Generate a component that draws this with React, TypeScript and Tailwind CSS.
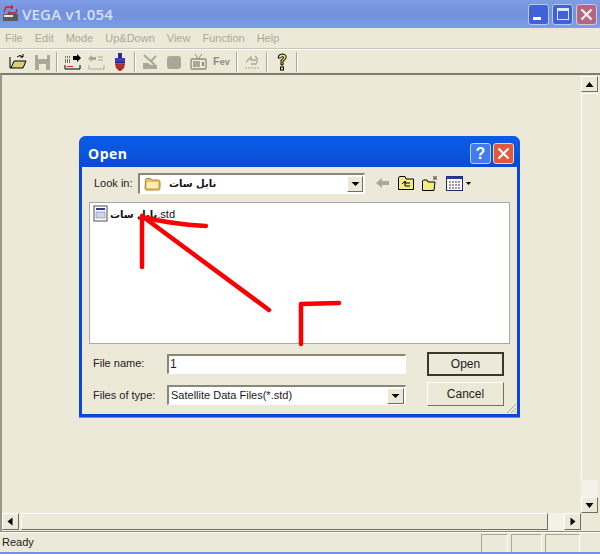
const Sep = () => <div className="w-[2px] h-[20px] mx-[2px] border-l border-[#aca899] bg-white" />

const TbIcon = ({ children }: { children: React.ReactNode }) => (
  <svg width="20" height="20" viewBox="0 0 20 20" className="shrink-0 mx-[2px]">{children}</svg>
)

const raised = "bg-[#ece9d8] border border-t-white border-l-white border-r-[#716f64] border-b-[#716f64] flex items-center justify-center"
const sunken = "border-t-2 border-l-2 border-t-[#8a8778] border-l-[#8a8778] border-r border-b border-r-white border-b-white"

const Arrow = ({ d }: { d: string }) => (
  <svg width="9" height="9" viewBox="0 0 9 9"><path d={d} fill="#000" /></svg>
)

const App = () => {
  const menus = ["File", "Edit", "Mode", "Up&Down", "View", "Function", "Help"]
  return (
    <div className="relative w-[600px] h-[554px] overflow-hidden bg-[#ece9d8] font-['Liberation_Sans',sans-serif] text-[11px] flex flex-col">
      {/* title bar */}
      <div className="h-[28px] shrink-0 flex items-center pl-[2px] pr-[3px] bg-gradient-to-b from-[#7f9de6] via-[#7290dc] to-[#7c9fe8]">
        <svg width="17" height="18" viewBox="0 0 17 18">
          <rect x="1" y="9" width="15" height="7" fill="#5a5a60" />
          <rect x="2" y="10" width="9" height="2" fill="#e8e4e0" />
          <path d="M2 7 L4 2 L11 2 M11 2 L9 0.5 M11 2 L9 4" stroke="#d02020" strokeWidth="1.3" fill="none" />
          <path d="M15 4 L14 8 L6 8 M6 8 L8 6.5 M6 8 L8 9.5" stroke="#d02020" strokeWidth="1.3" fill="none" />
        </svg>
        <span className="ml-[3px] text-[15px] font-semibold tracking-[0.2px] text-[#d7e0f6] font-['Open_Sans',sans-serif]">VEGA v1.054</span>
        <div className="ml-auto flex gap-[3px]">
          <div className="relative w-[21px] h-[21px] rounded-[3px] border border-[#b9c9f2] bg-[#3f62d6]">
            <div className="absolute left-[4px] bottom-[4px] w-[8px] h-[3px] bg-white" />
          </div>
          <div className="w-[21px] h-[21px] rounded-[3px] border border-[#b9c9f2] bg-[#3f62d6] flex items-center justify-center">
            <div className="w-[12px] h-[12px] border border-[#dfe8fb] border-t-[3px]" />
          </div>
          <div className="w-[21px] h-[21px] rounded-[3px] border border-[#d8c6d8] bg-[#b3687f] flex items-center justify-center">
            <svg width="13" height="13" viewBox="0 0 13 13"><path d="M1.5 1.5 L11.5 11.5 M11.5 1.5 L1.5 11.5" stroke="#f6eef0" strokeWidth="2.2" /></svg>
          </div>
        </div>
      </div>

      {/* menu */}
      <div className="h-[21px] shrink-0 flex items-center pl-[5px] pt-[1px] gap-[12px] text-[#aca899] text-[11px] border-b border-[#c9c6b6]">
        {menus.map((m) => <span key={m}>{m}</span>)}
      </div>

      {/* toolbar */}
      <div className="h-[24px] shrink-0 border-t border-white flex items-center pl-[6px]">
        <TbIcon>
          <path d="M2 5 L2 16 L15 16 L18 9 L6 9 L3 16" fill="#d8d070" stroke="#000" strokeWidth="1" />
          <path d="M9 5 Q12 2 15 5 M15 5 L15 2 M15 5 L12 5" stroke="#000" fill="none" />
        </TbIcon>
        <TbIcon>
          <rect x="3" y="3" width="15" height="15" fill="#aca899" />
          <rect x="6" y="3" width="9" height="4" fill="#ece9d8" />
          <rect x="7" y="12" width="7" height="6" fill="#ece9d8" />
        </TbIcon>
        <Sep />
        <TbIcon>
          <path d="M3 13 L3 17 L18 17 L18 13" fill="none" stroke="#000" />
          <rect x="5" y="14" width="6" height="1" fill="#d02020" />
          <path d="M11 4 L15 4 L15 2 L19 6 L15 10 L15 8 L11 8 Z" fill="#000" />
          <path d="M3 5 H9 M3 8 H8 M3 10 H9" stroke="#000" strokeDasharray="1 1" />
        </TbIcon>
        <TbIcon>
          <path d="M3 13 L3 17 L18 17 L18 13" fill="none" stroke="#aca899" />
          <path d="M10 5 L6 5 L6 3 L2 6.5 L6 10 L6 8 L10 8" fill="#aca899" />
          <path d="M12 5 H17 M12 8 H17" stroke="#aca899" />
        </TbIcon>
        <TbIcon>
          <rect x="8" y="1" width="4" height="5" fill="#2a2a8a" />
          <rect x="5" y="6" width="10" height="5" fill="#3c3cc8" />
          <path d="M5 12 H15 L14 16 L11 19 H9 L6 16 Z" fill="#b03030" />
          <path d="M5 11 H15" stroke="#000" />
        </TbIcon>
        <Sep />
        <TbIcon>
          <path d="M3 17 L3 11 L8 11 L11 13 L17 13 L17 17 Z" fill="#aca899" />
          <path d="M4 3 L15 13 M16 4 L11 9" stroke="#aca899" strokeWidth="2" />
        </TbIcon>
        <TbIcon><rect x="3" y="4" width="14" height="13" rx="3" fill="#aca899" /></TbIcon>
        <TbIcon>
          <rect x="3" y="7" width="15" height="10" rx="1" fill="none" stroke="#8f8c7c" strokeWidth="1.3" />
          <path d="M7 2 L10 7 L14 2" stroke="#8f8c7c" fill="none" />
          <rect x="5" y="9" width="7" height="6" fill="#aca899" />
          <rect x="14" y="10" width="2" height="4" fill="#8f8c7c" />
        </TbIcon>
        <div className="w-[24px] shrink-0 text-[#8f8c7c] font-bold text-[11px] leading-none pl-[3px]">F<span className="text-[9px]">ev</span></div>
        <Sep />
        <TbIcon>
          <path d="M4 10 L9 5 L9 8 L14 8 M13 4 Q17 7 14 12 L9 12" stroke="#aca899" fill="none" strokeWidth="1.3" />
          <path d="M3 16 H17" stroke="#aca899" strokeDasharray="2 1" />
        </TbIcon>
        <Sep />
        <TbIcon>
          <path d="M6 6 Q6 2 10 2 Q15 2 14 6 Q13.5 8 11 9 L11 13 L9 13 L9 8 Q12 7 11.5 5 Q10 3.5 8.5 6 Z" fill="#f2e34a" stroke="#000" strokeWidth="1" />
          <rect x="8.5" y="15" width="3" height="3" fill="#f2e34a" stroke="#000" />
        </TbIcon>
        <Sep />
      </div>

      {/* client area */}
      <div className="relative flex-1 min-h-0 flex flex-col border-t-2 border-l-2 border-t-[#7f7c6c] border-l-[#9a9787] border-b border-b-[#8f8c7c]">
        <div className="flex-1 min-h-0 flex justify-end pr-[2px]">
          <div className="w-[17px] flex flex-col">
            <div className={`${raised} h-[16px] mt-[1px]`}><Arrow d="M4.5 2 L8.5 7 L0.5 7 Z" /></div>
            <div className="flex-1 bg-[#ece9d8] border border-t-white border-l-white border-r-[#ece9d8] border-b-[#ece9d8] mt-[1px]" />
            <div className="h-[17px] bg-[#f4f2e8]" />
            <div className={`${raised} h-[16px]`}><Arrow d="M0.5 2 L8.5 2 L4.5 7 Z" /></div>
          </div>
        </div>
        <div className="h-[17px] shrink-0 flex pr-[19px] mb-[1px]">
          <div className={`${raised} w-[17px]`}><Arrow d="M6.5 0.5 L6.5 8.5 L1.5 4.5 Z" /></div>
          <div className={`${raised} flex-1 ml-[2px]`} />
          <div className="w-[16px] bg-[#f4f2e8]" />
          <div className={`${raised} w-[17px]`}><Arrow d="M2.5 0.5 L7.5 4.5 L2.5 8.5 Z" /></div>
        </div>
      </div>

      {/* status */}
      <div className="h-[20px] shrink-0 flex items-center pl-[2px] border-t border-white text-[11px] text-[#222]">
        <span>Ready</span>
        <div className="ml-auto flex gap-[3px] h-[18px] pr-[20px]">
          <div className="w-[27px] border-t border-l border-[#aca899] border-r border-r-white" />
          <div className="w-[31px] border-t border-l border-[#aca899] border-r border-r-white" />
          <div className="w-[35px] border-t border-l border-[#aca899] border-r border-r-white" />
        </div>
      </div>
      <div className="h-[2px] shrink-0 bg-[#7391de]" />

      {/* open dialog */}
      <div className="absolute left-[79px] top-[136px] w-[441px] h-[282px] rounded-t-[7px] bg-[#0a46d8] flex flex-col px-[3px] pb-[3px] border-b border-[#7f8cb8]">
        <div className="h-[31px] shrink-0 flex items-center pt-[4px] pl-[9px] pr-[6px] bg-gradient-to-b from-[#0a5be6] via-[#0a56e0] to-[#0a4ad0] rounded-t-[7px] -mx-[3px]">
          <span className="text-white font-bold text-[14px] tracking-[0.5px] font-['Open_Sans',sans-serif]">Open</span>
          <div className="ml-auto flex gap-[2px]">
            <div className="w-[21px] h-[21px] rounded-[3px] border border-[#bcd0f5] bg-[#3f7cf0] flex items-center justify-center text-white font-bold text-[16px] leading-none">?</div>
            <div className="w-[21px] h-[21px] rounded-[3px] border border-[#e8d6cc] bg-[#e2583a] flex items-center justify-center">
              <svg width="13" height="13" viewBox="0 0 13 13"><path d="M1.5 1.5 L11.5 11.5 M11.5 1.5 L1.5 11.5" stroke="#fff" strokeWidth="2.2" /></svg>
            </div>
          </div>
        </div>
        <div className="relative flex-1 min-h-0 bg-[#ece9d8] flex flex-col px-[7px] text-[#222]">
          {/* look in row */}
          <div className="h-[35px] shrink-0 flex items-center pb-[3px]">
            <span className="w-[49px] pl-[5px] whitespace-nowrap">Look in:</span>
            <div className={`w-[227px] h-[21px] bg-white flex items-center pl-[4px] ${sunken} pr-[1px]`}>
              <svg width="17" height="14" viewBox="0 0 17 14">
                <path d="M1.5 4 Q1 2 3 1.5 L6 1.5 L8 3 L14 3 Q16 3 16 5 L16 11 Q16 13 14 13 L3 13 Q1 13 1 11 Z" fill="#e8c466" stroke="#a8843a" />
                <rect x="3" y="5" width="11" height="6" rx="1" fill="#fdeeb4" />
              </svg>
              <span dir="rtl" className="ml-[8px] font-bold text-[10px] text-[#111] font-['DejaVu_Sans',sans-serif]">نايل سات</span>
              <div className={`${raised} ml-auto w-[16px] h-[16px]`}><Arrow d="M0.5 3 L8.5 3 L4.5 7 Z" /></div>
            </div>
            <div className="ml-[11px] flex items-center gap-[8px]">
              <svg width="14" height="12" viewBox="0 0 14 12"><path d="M0 6 L6 1 L6 4 L13 4 L13 8 L6 8 L6 11 Z" fill="#aca899" /></svg>
              <svg width="16" height="14" viewBox="0 0 16 14">
                <path d="M0.5 2 L0.5 13.5 L15.5 13.5 L15.5 3 L8 3 L7 0.5 L1.5 0.5 Z" fill="#f2ec82" stroke="#000" />
                <path d="M4 8 L7 5 L7 7 L12 7 M7 5 L7 10 L12 10" fill="none" stroke="#000" />
              </svg>
              <svg width="16" height="15" viewBox="0 0 16 15">
                <path d="M0.5 5 L0.5 14.5 L12 14.5 L13 6 L6 6 L5 4 L1.5 4 Z" fill="#f2ec82" stroke="#000" />
                <path d="M13 0 L13 4 M11 2 L15 2 M11 0 L15 4 M15 0 L11 4" stroke="#555" strokeWidth="0.8" />
              </svg>
              <svg width="25" height="15" viewBox="0 0 25 15">
                <rect x="0.5" y="0.5" width="16" height="14" fill="#fff" stroke="#1a2a6a" />
                <rect x="0.5" y="0.5" width="16" height="2.5" fill="#2a3a9a" />
                <path d="M3 6 H14 M3 9 H14 M3 12 H14" stroke="#334" strokeDasharray="2 1" />
                <path d="M20 6 L25 6 L22.5 9 Z" fill="#000" />
              </svg>
            </div>
          </div>
          {/* file list */}
          <div className="h-[142px] shrink-0 bg-white border border-[#a0aab8] pt-[2px] pl-[3px] flex items-start">
            <svg width="16" height="17" viewBox="0 0 16 17" className="shrink-0">
              <rect x="1" y="1" width="13" height="15" fill="#fff" stroke="#4a4a5a" />
              <rect x="3" y="3" width="9" height="2" fill="#2a3a9a" />
              <rect x="3" y="7" width="9" height="6" fill="#cfd6ea" stroke="#667" strokeWidth="0.5" />
            </svg>
            <span className="ml-[1px] mt-[1px] text-[10px] font-bold text-[#111] whitespace-nowrap font-['DejaVu_Sans',sans-serif]">نايل سات<span className="text-[11px] font-normal font-['Liberation_Sans',sans-serif]">.std</span></span>
          </div>
          {/* bottom form */}
          <div className="flex mt-[8px] pl-[4px]">
            <div className="w-[74px] flex flex-col">
              <div className="h-[22px] flex items-center">File name:</div>
              <div className="h-[31px] mt-[6px] flex items-center">Files of type:</div>
            </div>
            <div className="w-[239px] flex flex-col gap-[11px] pt-[2px]">
              <div className={`h-[20px] bg-white ${sunken} pl-[1px] leading-[17px] text-[12px]`}>1</div>
              <div className={`h-[20px] bg-white ${sunken} flex items-center pl-[2px] pr-[1px] whitespace-nowrap`}>
                <span>Satellite Data Files(*.std)</span>
                <div className={`${raised} ml-auto w-[17px] h-[16px]`}><Arrow d="M0.5 3 L8.5 3 L4.5 7 Z" /></div>
              </div>
            </div>
            <div className="ml-[21px] w-[77px] flex flex-col gap-[6px] text-[12px]">
              <div className="h-[24px] bg-[#ece9d8] border-2 border-[#3a392f] flex items-center justify-center">Open</div>
              <div className={`${raised} h-[24px]`}>Cancel</div>
            </div>
          </div>
          <svg width="12" height="12" viewBox="0 0 12 12" className="absolute right-0 bottom-0">
            <path d="M11 2 L2 11 M11 6 L6 11 M11 9.5 L9.5 11" stroke="#aca899" />
          </svg>
        </div>
      </div>

      {/* red marks drawn over the screenshot */}
      <svg width="600" height="554" viewBox="0 0 600 554" className="absolute left-0 top-0 pointer-events-none">
        <g stroke="#fb0000" strokeWidth="4.5" fill="none" strokeLinecap="round" strokeLinejoin="round">
          <path d="M269 310 L142 216 L142 267" />
          <path d="M142 217 Q170 224 206 226" />
          <path d="M301 344 L301 304 L339 303" />
        </g>
      </svg>
    </div>
  )
}

export default App
